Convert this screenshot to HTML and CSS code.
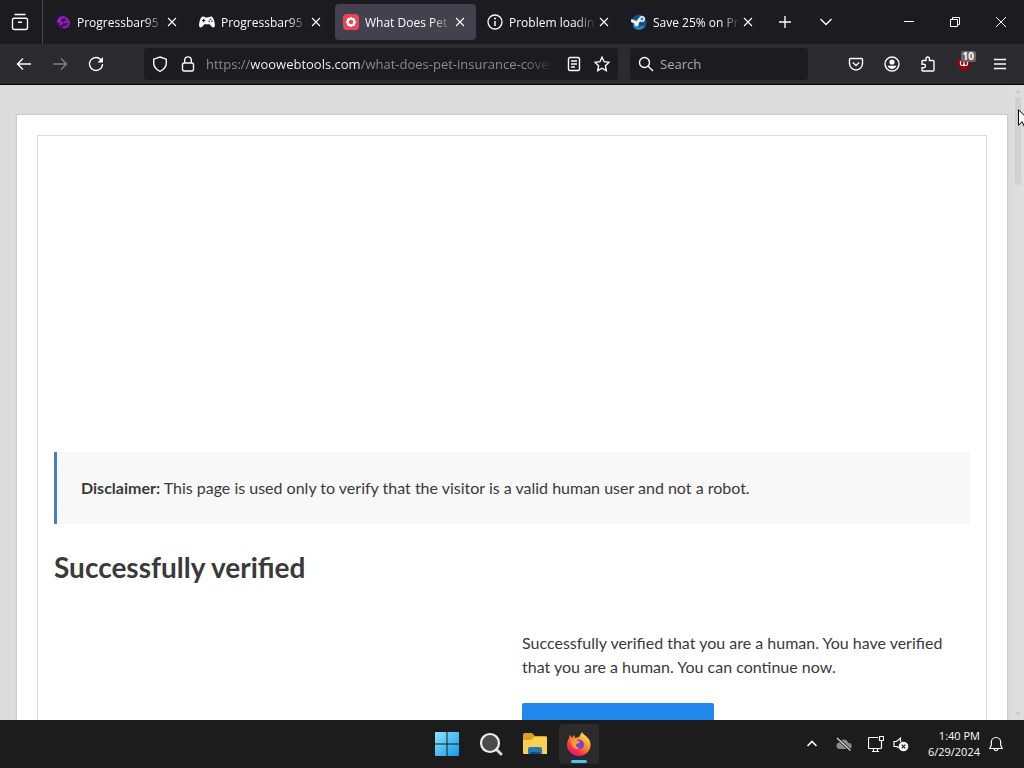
FILE: index.html
```html
<!DOCTYPE html>
<html lang="en">
<head>
  <meta charset="UTF-8">
  <meta name="viewport" content="width=device-width, initial-scale=1.0">
  <title>What Does Pet Insurance Cover</title>
  <link rel="stylesheet" href="styles.css">
</head>
<body>
  <header class="browser">
    <div class="tabbar">
      <button class="view" aria-label="Firefox View">
        <svg class="icon-lg" viewBox="0 0 20 20"><path d="M4.500 2.500h11M4 6.200h12a1.500 1.500 0 0 1 1.500 1.500v7.800a2 2 0 0 1-2 2h-11a2 2 0 0 1-2-2V7.700a1.500 1.500 0 0 1 1.500-1.500zM8 10.200h4" /></svg>
      </button>
      <div class="tabs">
        <div class="tab">
          <svg class="favicon" viewBox="0 0 16 16"><circle cx="8" cy="8" r="7" fill="#41105c"/><path d="M2 8c1-5 6-7 9-5-2 2-6 1-5 4s-2 3-4 1z" fill="#a31fc4"/><path d="M8 13c4 1 6-2 6-5-2-2-3 1-5 0" fill="none" stroke="#8a22b8" stroke-width="2"/><path d="M10 4l3 2M5 11l3-3" stroke="#b32bd0" stroke-width="1.500"/></svg>
          <span class="title">Progressbar95 Free</span>
          <button class="close" aria-label="Close tab"><svg viewBox="0 0 10 10"><path d="M1 1l8 8M9 1L1 9"/></svg></button>
        </div>
        <div class="tab">
          <svg class="favicon" viewBox="0 0 16 16"><path d="M3.500 2.500C5 2 6 3.500 8 3.500s3-1.500 4.500-1c2 .6 3.500 6 3.400 9 0 2.500-2.600 2.500-3.900.5-.8-1.200-1.200-1.800-2-1.800H6c-.8 0-1.200.6-2 1.800-1.300 2-3.900 2-3.900-.5C0 8.500 1.500 3.100 3.500 2.500z" fill="#fff"/><path d="M4.700 4.800v3.400M3 6.500h3.400" stroke="#1c1b1f" stroke-width="1.200"/><circle cx="11.500" cy="5.200" r=".8" fill="#1c1b1f"/><circle cx="10.200" cy="7.200" r=".8" fill="#1c1b1f"/><circle cx="12.900" cy="7.200" r=".8" fill="#1c1b1f"/></svg>
          <span class="title">Progressbar95 Free</span>
          <button class="close" aria-label="Close tab"><svg viewBox="0 0 10 10"><path d="M1 1l8 8M9 1L1 9"/></svg></button>
        </div>
        <div class="tab active">
          <svg class="favicon" viewBox="0 0 16 16"><rect width="16" height="16" rx="4" fill="#ee4456"/><path d="M8 2.800l1.600 1.100 1.900.2.500 1.900L13.200 8 12 10l-.5 1.900-1.900.2L8 13.200l-1.600-1.100-1.900-.2L4 10 2.800 8 4 6l.5-1.900 1.900-.2z" fill="#fff"/><circle cx="8" cy="8" r="2.200" fill="#ee4456"/></svg>
          <span class="title">What Does Pet Insurance</span>
          <button class="close" aria-label="Close tab"><svg viewBox="0 0 10 10"><path d="M1 1l8 8M9 1L1 9"/></svg></button>
        </div>
        <div class="tab">
          <svg class="favicon" viewBox="0 0 16 16"><circle cx="8" cy="8" r="7" fill="none" stroke="#fbfbfe" stroke-width="1.300"/><path d="M8 7v5" stroke="#fbfbfe" stroke-width="1.500"/><circle cx="8" cy="4.600" r="1" fill="#fbfbfe"/></svg>
          <span class="title">Problem loading page</span>
          <button class="close" aria-label="Close tab"><svg viewBox="0 0 10 10"><path d="M1 1l8 8M9 1L1 9"/></svg></button>
        </div>
        <div class="tab">
          <svg class="favicon" viewBox="0 0 16 16"><path d="M1 5.500A7.500 7.500 0 1 1 2 12.500z" fill="#174f86"/><path d="M1.500 11.500a7 7 0 0 0 13 0l-6 1z" fill="#2485bd"/><path d="M0 6.500l6 2.500 3-4" fill="none" stroke="#e9f1f8" stroke-width="3"/><circle cx="5.500" cy="10" r="2.400" fill="#e9f1f8"/><circle cx="11" cy="5" r="3" fill="#e9f1f8"/><circle cx="11" cy="5" r="1.500" fill="#4d7fae"/></svg>
          <span class="title">Save 25% on Progressbar95</span>
          <button class="close" aria-label="Close tab"><svg viewBox="0 0 10 10"><path d="M1 1l8 8M9 1L1 9"/></svg></button>
        </div>
      </div>
      <button class="tool" aria-label="New tab"><svg class="icon" viewBox="0 0 16 16"><path d="M8 2v12M2 8h12"/></svg></button>
      <button class="tool" aria-label="List all tabs"><svg class="icon" viewBox="0 0 16 16"><path d="M2.500 5l5.500 5.500L13.500 5"/></svg></button>
      <div class="window-buttons">
        <button aria-label="Minimize"><svg viewBox="0 0 10 10"><path d="M0 4.500h10"/></svg></button>
        <button aria-label="Restore"><svg viewBox="0 0 10 10"><path d="M.5 2.500h7v7h-7zM2.500 2.500v-2h7v7h-2"/></svg></button>
        <button aria-label="Close"><svg viewBox="0 0 10 10"><path d="M0 0l10 10M10 0L0 10"/></svg></button>
      </div>
    </div>

    <div class="toolbar">
      <div class="nav">
        <button class="tool" aria-label="Back"><svg class="icon" viewBox="0 0 16 16"><path d="M15 8H1.500M7 2.500L1.500 8 7 13.500"/></svg></button>
        <button class="tool" aria-label="Forward" disabled><svg class="icon" viewBox="0 0 16 16"><path d="M1 8h13.500M9 2.500L14.500 8 9 13.500"/></svg></button>
        <button class="tool" aria-label="Reload"><svg class="icon" viewBox="0 0 16 16"><path d="M13.500 4.500A6.500 6.500 0 1 0 14.500 8"/><path d="M15 1v5.500H9.500z" fill="#fbfbfe" stroke="none"/></svg></button>
      </div>
      <div class="urlbar">
        <svg class="icon" viewBox="0 0 16 16"><path d="M8 1l6.300 2.200V7c0 3.800-2.500 6.600-6.300 8.300C4.200 13.600 1.700 10.800 1.700 7V3.200z"/></svg>
        <svg class="icon" viewBox="0 0 16 16"><rect x="2.500" y="7" width="11" height="8" rx="1.500"/><path d="M4.700 7V4.200a3.300 3.300 0 0 1 6.600 0V7"/></svg>
        <input class="url" type="text" aria-label="Address" value="https://woowebtools.com/what-does-pet-insurance-cover">
        <svg class="icon" viewBox="0 0 16 16"><rect x="2.500" y="1.500" width="11" height="13" rx="1.500"/><path d="M5 5h6M5 8h6M5 11h4"/></svg>
        <svg class="icon" viewBox="0 0 16 16"><path d="M8 1.200l2.100 4.500 4.900.6-3.600 3.400.9 4.900L8 12.200l-4.300 2.400.9-4.900L1 6.300l4.900-.6z"/></svg>
      </div>
      <label class="search">
        <svg class="icon" viewBox="0 0 16 16"><circle cx="6.500" cy="6.500" r="5"/><path d="M10.200 10.200L15 15"/></svg>
        <input type="text" placeholder="Search" aria-label="Search">
      </label>
      <div class="actions">
        <button class="tool" aria-label="Save to Pocket"><svg class="icon" viewBox="0 0 16 16"><path d="M2.500 2.500h11a1 1 0 0 1 1 1V7.500a6.500 6.500 0 0 1-13 0V3.500a1 1 0 0 1 1-1z"/><path d="M4.800 6.500L8 9.500l3.200-3"/></svg></button>
        <button class="tool" aria-label="Account"><svg class="icon" viewBox="0 0 16 16"><circle cx="8" cy="8" r="7"/><circle cx="8" cy="6" r="2.600" fill="#fbfbfe" stroke="none"/><path d="M3.500 9.800h9c-.7 2-2.500 3.200-4.500 3.200s-3.800-1.200-4.500-3.200z" fill="#fbfbfe" stroke="none"/></svg></button>
        <button class="tool" aria-label="Extensions"><svg class="icon" viewBox="0 0 16 16"><path d="M2 5.500a1 1 0 0 1 1-1h3V2.700a1.700 1.700 0 0 1 3.400 0v1.800H13a1 1 0 0 1 1 1V14a1 1 0 0 1-1 1H3a1 1 0 0 1-1-1v-2.300h1.800a1.700 1.700 0 0 0 0-3.400H2z"/></svg></button>
        <button class="tool blocker" aria-label="uBlock Origin"><svg class="icon" viewBox="0 0 16 16"><path d="M8 1c2 1.500 4 2 6.500 2 0 6-1 9.500-6.500 12.500C2.500 12.500 1.500 9 1.500 3 4 3 6 2.500 8 1z" fill="#a00010" stroke="none"/><path d="M4.500 5v3c0 2 3.500 2 3.500 0V5.500M8 8c0 2 3.500 2 3.500 0V5" stroke-width="1.200"/></svg><span class="badge">10</span></button>
        <button class="tool" aria-label="Menu"><svg class="icon" viewBox="0 0 16 16"><path d="M2 3.500h12M2 8h12M2 12.500h12"/></svg></button>
      </div>
    </div>
  </header>

  <main class="viewport">
    <article class="page">
      <div class="content">
        <div class="ad-slot"></div>
        <p class="disclaimer"><strong>Disclaimer:</strong> This page is used only to verify that the visitor is a valid human user and not a robot.</p>
        <h1>Successfully verified</h1>
        <div class="columns">
          <div class="column"></div>
          <div class="column">
            <p>Successfully verified that you are a human. You have verified that you are a human. You can continue now.</p>
            <button class="continue" aria-label="Continue"></button>
          </div>
        </div>
      </div>
    </article>
    <div class="scrollbar">
      <svg class="arrow" viewBox="0 0 6 4"><path d="M0 4l3-4 3 4z"/></svg>
      <div class="thumb"></div>
      <svg class="arrow" viewBox="0 0 6 4"><path d="M0 0l3 4 3-4z"/></svg>
    </div>
    <svg class="pointer" viewBox="0 0 12 19"><path d="M.5.700v15.500l3.700-3.500 2.400 5.500 2.300-1-2.400-5.300h5.100z" fill="#fff" stroke="#000"/></svg>
  </main>

  <footer class="taskbar">
    <div class="apps">
      <button class="app" aria-label="Start"><svg viewBox="0 0 24 24"><defs><linearGradient id="win" x1="0" y1="0" x2="24" y2="24" gradientUnits="userSpaceOnUse"><stop stop-color="#8ce5fb"/><stop offset="1" stop-color="#1598e8"/></linearGradient></defs><path d="M1 0h10.500v11.500H0V1a1 1 0 0 1 1-1zM12.500 0H23a1 1 0 0 1 1 1v10.500H12.500zM0 12.500h11.500V24H1a1 1 0 0 1-1-1zM12.500 12.500H24V23a1 1 0 0 1-1 1H12.500z" fill="url(#win)"/></svg></button>
      <button class="app" aria-label="Search"><svg viewBox="0 0 24 24"><path d="M17 17l5 5" stroke="#d8d8d8" stroke-width="3" stroke-linecap="round"/><circle cx="11" cy="11" r="9" fill="#4b4b4b" stroke="#ededed" stroke-width="2.200"/></svg></button>
      <button class="app" aria-label="File Explorer"><svg viewBox="0 0 24 24"><path d="M0 3a2 2 0 0 1 2-2h7l3 3h11a1 1 0 0 1 1 1v5H0z" fill="#dd9e21"/><path d="M0 8h8l3-3h12a1 1 0 0 1 1 1v16H1a1 1 0 0 1-1-1z" fill="#f9d052"/><path d="M5 22v-5a2 2 0 0 1 2-2h10a2 2 0 0 1 2 2v5z" fill="#2577b8"/><path d="M7 20h10v2H7z" fill="#124f87"/></svg></button>
      <button class="app running" aria-label="Firefox"><svg viewBox="0 0 24 24"><defs><linearGradient id="fox" x1="20" y1="2" x2="5" y2="22" gradientUnits="userSpaceOnUse"><stop stop-color="#ffe34a"/><stop offset=".45" stop-color="#ff8a26"/><stop offset=".8" stop-color="#f62e52"/><stop offset="1" stop-color="#e31587"/></linearGradient></defs><path d="M2 6l1-3 2 3 2-3 1 3 4-1 3-5c1 3 8 5 8.500 12C24 19 18.500 24 12 24S0 19 0 13c0-3 1-5 2-7z" fill="url(#fox)"/><circle cx="12" cy="12.500" r="5" fill="#7642d4"/><path d="M4 8c4-1 6 0 9 2-1 2-4 1-4 3s2 3 4 3c-5 3-9-1-9-8z" fill="#ff9a2b"/></svg></button>
    </div>
    <div class="tray">
      <svg class="tray-icon" viewBox="0 0 16 16"><path d="M3.500 10L8 5.500l4.500 4.500" stroke-width="1.600"/></svg>
      <svg class="tray-icon" viewBox="0 0 16 16"><path d="M3.500 13a3.300 3.300 0 0 1-.5-6.500 5 5 0 0 1 9.300.5 3 3 0 0 1 .7 6z" fill="#8b8b8b" stroke="none"/><path d="M1 2l13.500 12.500" stroke="#1c1c1c" stroke-width="3"/><path d="M1 2l13.500 12.500" stroke="#ddd"/></svg>
      <div class="status">
        <svg class="tray-icon" viewBox="0 0 16 16"><path d="M10 1.500H1.500a1 1 0 0 0-1 1v9a1 1 0 0 0 1 1h11a1 1 0 0 0 1-1V7M4 15.500h7M5.500 12.500v3M9.500 12.500v3M11.500.5h4v4h-4zM13.500 4.500V7"/></svg>
        <svg class="tray-icon" viewBox="0 0 16 16"><path d="M5.500 12L4 10.500H1v-5h2.500L7.500 2v4"/><circle cx="10.500" cy="10.500" r="4.800" fill="#fff" stroke="none"/><path d="M8.700 8.700l3.600 3.600M12.300 8.700l-3.600 3.600" stroke="#1c1c1c"/></svg>
      </div>
      <div class="clock"><time>1:40 PM</time><time>6/29/2024</time></div>
      <svg class="tray-icon" viewBox="0 0 16 16"><path d="M8 1.500a4.700 4.700 0 0 0-4.700 4.700v3L1.800 12.500h12.400l-1.500-3.300v-3A4.700 4.700 0 0 0 8 1.500zM6 12.800c.3 2.400 3.700 2.400 4 0"/></svg>
    </div>
  </footer>
</body>
</html>
```
FILE: styles.css
```css
* {
  box-sizing: border-box;
}
body {
  margin: 0;
  height: 100vh;
  display: flex;
  flex-direction: column;
  overflow: hidden;
  font-family: "Open Sans", "Noto Sans", sans-serif;
  font-size: 12px;
  color: #fbfbfe;
}
button {
  background: none;
  border: none;
  padding: 0;
  color: inherit;
  font: inherit;
}
svg {
  flex: none;
  display: block;
}
.browser {
  flex: none;
  border-bottom: 1px solid #050506;
}
.icon, .icon-lg, .tray-icon, .close svg, .window-buttons svg {
  fill: none;
  stroke: #fbfbfe;
  stroke-width: 1.4;
}
.icon, .tray-icon {
  width: 16px;
  height: 16px;
}
.icon-lg {
  width: 20px;
  height: 20px;
}

/* tabs */
.tabbar {
  display: flex;
  align-items: center;
  height: 44px;
  background: #1c1b1f;
}
.view {
  display: flex;
  flex: none;
  align-items: center;
  justify-content: center;
  width: 43px;
  height: 44px;
  padding-right: 2px;
  border-right: 1px solid #48474f;
}
.tabs {
  display: flex;
  flex: 0 1 717px;
  gap: 3px;
  min-width: 0;
  margin-left: 4px;
}
.tab {
  display: flex;
  flex: 1;
  align-items: center;
  min-width: 0;
  height: 36px;
  padding: 0 8px;
  border-radius: 4px;
}
.tab.active {
  background: #42414d;
}
.favicon {
  width: 16px;
  height: 16px;
  margin-right: 6px;
}
.title {
  flex: 1;
  min-width: 0;
  overflow: hidden;
  white-space: nowrap;
  -webkit-mask-image: linear-gradient(to left, transparent, #000 20px);
  mask-image: linear-gradient(to left, transparent, #000 20px);
}
.close {
  display: flex;
  flex: none;
  align-items: center;
  justify-content: center;
  width: 16px;
  height: 20px;
}
.close svg {
  width: 10px;
  height: 10px;
  stroke-width: 1.1;
}
.tool {
  display: flex;
  flex: none;
  align-items: center;
  justify-content: center;
  width: 36px;
  height: 36px;
}
.tabbar .tool {
  width: 41px;
}
.tool:disabled {
  opacity: 0.4;
}
.window-buttons {
  display: flex;
  flex: none;
  margin-left: auto;
}
.window-buttons button {
  display: flex;
  align-items: center;
  justify-content: center;
  width: 46px;
  height: 44px;
}
.window-buttons svg {
  width: 10px;
  height: 10px;
  overflow: visible;
  stroke-width: 1;
}

/* address bar */
.toolbar {
  display: flex;
  align-items: center;
  height: 40px;
  padding: 0 6px;
  background: #2b2a2f;
}
.nav, .actions {
  display: flex;
}
.urlbar, .search {
  display: flex;
  align-items: center;
  height: 32px;
  padding: 0 8px;
  background: #1c1b1f;
  border-radius: 4px;
}
.urlbar {
  flex: 1;
  gap: 12px;
  min-width: 0;
  margin: 0 12px 0 30px;
}
.toolbar input {
  flex: 1;
  min-width: 0;
  height: 24px;
  padding: 0;
  border: none;
  outline: none;
  background: none;
  color: #fbfbfe;
  font: 13px "Open Sans", "Noto Sans", sans-serif;
}
/* the domain is brighter than the rest of the address */
.toolbar .url {
  margin-left: -2px;
  color: transparent;
  background: linear-gradient(to right, #8f8f96 45px, #fbfbfe 45px, #fbfbfe 155px, #8f8f96 155px);
  -webkit-background-clip: text;
  background-clip: text;
  -webkit-mask-image: linear-gradient(to left, transparent, #000 30px);
  mask-image: linear-gradient(to left, transparent, #000 30px);
}
.search {
  gap: 6px;
  width: 178px;
}
.toolbar input::placeholder {
  color: #a9a9b0;
  opacity: 1;
}
.actions {
  margin-left: 30px;
}
.blocker {
  position: relative;
}
.badge {
  position: absolute;
  top: 5px;
  right: 6px;
  padding: 0 2px;
  border-radius: 2px;
  background: #666;
  color: #fff;
  font-size: 10px;
  font-weight: bold;
  line-height: 11px;
}

/* web page */
.viewport {
  position: relative;
  flex: 1;
  min-height: 0;
  overflow: hidden;
  padding: 30px 17px 0;
  background: #dcdcdc;
  color: #3a3a3a;
  font: 16px/24px Lato, sans-serif;
}
.page {
  padding: 20px;
  background: #fff;
  box-shadow: 0 0 2px #aaa;
}
.content {
  padding: 16px;
  border: 1px solid #ddd;
}
.ad-slot {
  height: 300px;
}
.disclaimer {
  margin: 0 0 23px;
  padding: 24px;
  border-left: 3px solid #4682b4;
  background: #f8f8f8;
}
h1 {
  margin: 0 0 44px;
  font-size: 28px;
  line-height: 40px;
}
.columns {
  display: flex;
  gap: 20px;
}
.column {
  flex: 1;
}
.column p {
  margin: 0 0 24px;
}
.continue {
  width: 192px;
  height: 48px;
  border-radius: 2px;
  background: #2188eb;
}
.scrollbar {
  position: absolute;
  top: 0;
  right: 0;
  bottom: 0;
  display: flex;
  flex-direction: column;
  gap: 4px;
  width: 12px;
  padding: 4px 3px;
  background: #dedede;
}
.thumb {
  height: 88px;
  margin-bottom: auto;
  border-radius: 3px;
  background: #d0d0d0;
}
.arrow {
  width: 6px;
  height: 4px;
  fill: #cdcdcd;
}
.pointer {
  position: absolute;
  top: 24px;
  right: -6px;
  width: 12px;
  height: 19px;
}

/* taskbar */
.taskbar {
  display: flex;
  flex: none;
  align-items: center;
  height: 48px;
  padding-right: 20px;
  background: #1c1c1c;
}
.apps {
  display: flex;
  flex: 1;
  justify-content: flex-end;
  gap: 4px;
}
.app {
  position: relative;
  display: flex;
  align-items: center;
  justify-content: center;
  width: 40px;
  height: 40px;
  border-radius: 4px;
}
.app svg {
  width: 24px;
  height: 24px;
}
.app.running {
  background: #2b2b2b;
}
.app.running::after {
  content: "";
  position: absolute;
  bottom: 1px;
  left: 12px;
  width: 16px;
  height: 3px;
  border-radius: 2px;
  background: #4cc2ee;
}
.tray {
  display: flex;
  flex: 0 0 405px;
  align-items: center;
  justify-content: flex-end;
  gap: 16px;
}
.tray-icon {
  stroke-width: 1.2;
}
.status {
  display: flex;
  gap: 9px;
}
.clock {
  display: flex;
  flex-direction: column;
  min-width: 55px;
  margin-right: -8px;
  text-align: right;
  font-size: 11px;
  line-height: 16px;
}
```
